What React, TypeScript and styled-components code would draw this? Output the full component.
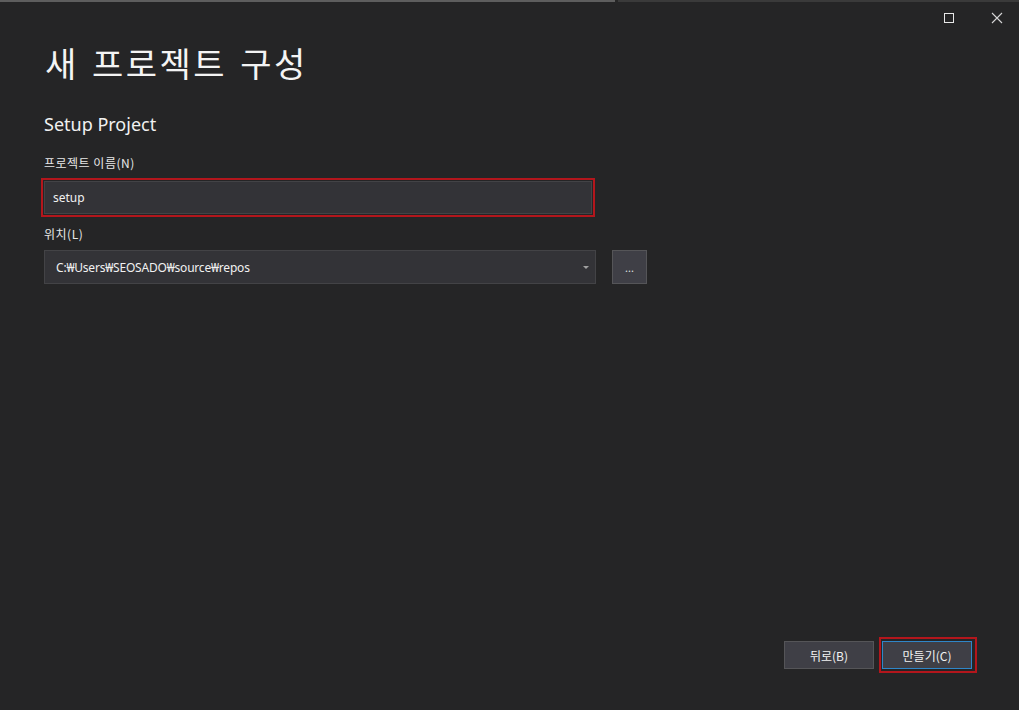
import styled, { createGlobalStyle } from "styled-components";

const GlobalStyle = createGlobalStyle`
  html, body {
    margin: 0;
    padding: 0;
    background: #252526;
  }
  body {
    font-family: "Noto Sans", "Noto Sans CJK KR", sans-serif;
    color: #f1f1f1;
  }
`;

const App = () => {
  return (
    <Window>
      <GlobalStyle />
      <TopEdge />
      <TitleBar>
        <MaxIcon />
        <CloseIcon viewBox="0 0 12 12">
          <path d="M1 1 L11 11 M11 1 L1 11" stroke="#d6d6d6" strokeWidth="1.1" />
        </CloseIcon>
      </TitleBar>
      <Content>
        <Title>새 프로젝트 구성</Title>
        <Subtitle>Setup Project</Subtitle>
        <Label gap={18}>프로젝트 이름(N)</Label>
        <Highlight>
          <Input>setup</Input>
        </Highlight>
        <Label gap={8}>위치(L)</Label>
        <Row>
          <Select>
            C:₩Users₩SEOSADO₩source₩repos
            <Caret />
          </Select>
          <BrowseButton>...</BrowseButton>
        </Row>
      </Content>
      <Footer>
        <Button>뒤로(B)</Button>
        <ButtonHighlight>
          <Button primary>만들기(C)</Button>
        </ButtonHighlight>
      </Footer>
    </Window>
  );
};

const Window = styled.div`
  display: flex;
  flex-direction: column;
  width: 1019px;
  height: 710px;
  background: #252526;
  overflow: hidden;
`;

const TopEdge = styled.div`
  height: 2px;
  background: linear-gradient(
    to right,
    #5e5e5e 0,
    #5e5e5e 615px,
    #262626 615px,
    #262626 618px,
    #3a3a3a 618px
  );
`;

const TitleBar = styled.div`
  display: flex;
  justify-content: flex-end;
  align-items: center;
  gap: 37px;
  height: 31px;
  padding-right: 16px;
`;

const MaxIcon = styled.div`
  width: 8px;
  height: 8px;
  border: 1px solid #e8e8e8;
`;

const CloseIcon = styled.svg`
  width: 12px;
  height: 12px;
`;

const Content = styled.div`
  display: flex;
  flex-direction: column;
  align-items: flex-start;
  padding: 0 44px;
`;

const Title = styled.h1`
  margin: 8px 0 0 1px;
  font-family: "Noto Sans CJK KR", sans-serif;
  font-size: 34px;
  font-weight: 400;
  line-height: 44px;
  letter-spacing: 2.5px;
  word-spacing: 3px;
  color: #f4f4f4;
`;

const Subtitle = styled.h2`
  margin: 27px 0 0;
  font-size: 18px;
  font-weight: 400;
  line-height: 24px;
  color: #f1f1f1;
`;

const Label = styled.div<{ gap: number }>`
  margin-top: ${(props) => props.gap}px;
  font-family: "Noto Sans CJK KR", sans-serif;
  font-size: 12px;
  line-height: 18px;
  letter-spacing: 0.5px;
  color: #e8e8e8;
`;

const Highlight = styled.div`
  margin: 6px 0 0 -3px;
  border: 2px solid #b3161c;
  padding: 1px;
`;

const Input = styled.div`
  box-sizing: border-box;
  width: 548px;
  height: 33px;
  padding: 0 8px;
  display: flex;
  align-items: center;
  background: #333337;
  border: 1px solid #434346;
  font-size: 12px;
  color: #f1f1f1;
`;

const Row = styled.div`
  display: flex;
  gap: 16px;
  margin-top: 7px;
`;

const Select = styled.div`
  position: relative;
  box-sizing: border-box;
  width: 552px;
  height: 34px;
  padding: 0 11px;
  display: flex;
  align-items: center;
  background: #333337;
  border: 1px solid #434346;
  font-size: 12px;
  letter-spacing: -0.2px;
  color: #f1f1f1;
`;

const Caret = styled.span`
  position: absolute;
  right: 6px;
  top: 15px;
  width: 0;
  height: 0;
  border-left: 3px solid transparent;
  border-right: 3px solid transparent;
  border-top: 3px solid #a0a0a0;
`;

const BrowseButton = styled.div`
  box-sizing: border-box;
  width: 35px;
  height: 34px;
  display: flex;
  align-items: center;
  justify-content: center;
  background: #3f3f46;
  border: 1px solid #555558;
  font-size: 11px;
  color: #e0e0e0;
`;

const Footer = styled.div`
  display: flex;
  justify-content: flex-end;
  align-items: center;
  gap: 5px;
  margin-top: auto;
  padding: 0 42px 37px 0;
`;

const ButtonHighlight = styled.div`
  border: 2px solid #b3161c;
  padding: 2px 3px 2px 1px;
`;

const Button = styled.div<{ primary?: boolean }>`
  box-sizing: border-box;
  width: 90px;
  height: 28px;
  display: flex;
  align-items: center;
  justify-content: center;
  background: #3f3f46;
  border: 1px solid ${(props) => (props.primary ? "#2f86c8" : "#555558")};
  font-family: "Noto Sans CJK KR", sans-serif;
  font-size: 12px;
  color: #f1f1f1;
`;

export default App;
